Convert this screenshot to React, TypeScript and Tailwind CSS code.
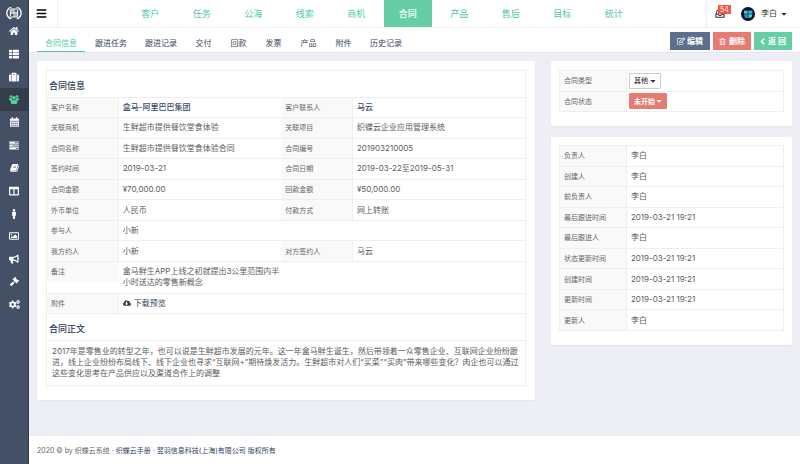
import React, { useState } from 'react';
import {
  FaBars, FaBullhorn, FaCaretDown, FaCloudDownloadAlt, FaCogs, FaColumns,
  FaGavel, FaHome, FaMale, FaRegEdit, FaRegImage, FaRegTrashAlt, FaSuitcase, FaThList,
} from 'react-icons/fa';

const NAV_ITEMS = ['客户', '任务', '公海', '线索', '商机', '合同', '产品', '售后', '目标', '统计'];
const TABS = ['合同信息', '跟进任务', '跟进记录', '交付', '回款', '发票', '产品', '附件', '历史记录'];

const CONTRACT_ROWS = [
  ['客户名称', '盒马-阿里巴巴集团', '客户联系人', '马云'],
  ['关联商机', '生鲜超市提供餐饮堂食体验', '关联项目', '织蝶云企业应用管理系统'],
  ['合同名称', '生鲜超市提供餐饮堂食体验合同', '合同编号', '201903210005'],
  ['签约时间', '2019-03-21', '合同日期', '2019-03-22至2019-05-31'],
  ['合同金额', '¥70,000.00', '回款金额', '¥50,000.00'],
  ['外币单位', '人民币', '付款方式', '网上转账'],
  ['参与人', '小新'],
  ['我方约人', '小新', '对方签约人', '马云'],
];

const RECORD_ROWS = [
  ['负责人', '李白'],
  ['创建人', '李白'],
  ['前负责人', '李白'],
  ['最后跟进时间', '2019-03-21 19:21'],
  ['最后跟进人', '李白'],
  ['状态更新时间', '2019-03-21 19:21'],
  ['创建时间', '2019-03-21 19:21'],
  ['更新时间', '2019-03-21 19:21'],
  ['更新人', '李白'],
];

const TasksIcon: React.FC = () => (
  <svg viewBox="0 0 28 24" className="w-[10px] h-[9px]" fill="currentColor">
    <path fillRule="evenodd" d="M1 1h26v6H1zM16 3v2h9V3zM1 9h26v6H1zM10 11v2h15v-2zM1 17h26v6H1zM19 19v2h6v-2z" />
  </svg>
);

const CalendarIcon: React.FC = () => (
  <svg viewBox="0 0 26 28" className="w-[9px] h-[10px]" fill="currentColor">
    <path d="M2 4h3V1.500a1.500 1.500 0 0 1 1.500-1.500h1A1.500 1.500 0 0 1 9 1.500V4h8V1.500A1.500 1.500 0 0 1 18.500 0h1A1.500 1.500 0 0 1 21 1.500V4h3a2 2 0 0 1 2 2v4H0V6a2 2 0 0 1 2-2z" />
    <path fillRule="evenodd" d="M0 10h26v16a2 2 0 0 1-2 2H2a2 2 0 0 1-2-2zM2 11v4h4.500v-4zM7.500 11v4h5v-4zM13.500 11v4h5v-4zM19.500 11v4H24v-4zM2 16v4h4.500v-4zM7.500 16v4h5v-4zM13.500 16v4h5v-4zM19.500 16v4H24v-4zM2 21v5h4.500v-5zM7.500 21v5h5v-5zM13.500 21v5h5v-5zM19.500 21v5H24v-5z" />
    <path d="M0 10h26v16a2 2 0 0 1-2 2H2a2 2 0 0 1-2-2z" opacity="0.4" />
  </svg>
);

const UsersIcon: React.FC = () => (
  <svg viewBox="0 0 30 27" className="w-[10px] h-[9px]" fill="currentColor">
    <circle cx="6" cy="4.500" r="4" />
    <circle cx="24" cy="4.500" r="4" />
    <circle cx="15" cy="8.500" r="5.500" />
    <path d="M2 9q4 2 7 0-1 4 2 6-3 0-5 2H3q-3 0-3-3.500Q0 8 2 9zM28 9q-4 2-7 0 1 4-2 6 3 0 5 2h3q3 0 3-3.500Q30 8 28 9z" />
    <path d="M10 14q5 3.500 10 0 5 1 5 8 0 5-4 5H9q-4 0-4-5 0-7 5-8z" />
  </svg>
);

const BookIcon: React.FC = () => (
  <svg viewBox="0 0 27 24" className="w-[9px] h-2" fill="currentColor">
    <path fillRule="evenodd" d="M9 0h14q2 0 1.500 2L19 18q-.6 2-3 2H4.500q-1.500 0-1 1.200T5.500 22H19L25.500 4q2 1 1.300 3L22 22q-.6 2-3 2H5Q0 24 0 19L5.500 3Q6.500 0 9 0zM11 5l-.6 2h9l.6-2zM9.600 9.500 9 11.500h9l.6-2z" />
  </svg>
);

const InboxIcon: React.FC = () => (
  <svg viewBox="0 0 24 22" className="w-[10px] h-[9px]" fill="none" stroke="currentColor" strokeWidth="2.500">
    <path d="M2 13 5.500 3h13L22 13v7H2zM2 13h6l2 3h4l2-3h6" />
  </svg>
);

const ChevronIcon: React.FC = () => (
  <svg viewBox="0 0 14 20" className="w-[5px] h-[7px]" fill="none" stroke="currentColor" strokeWidth="4.500">
    <path d="M12 2 4 10l8 8" />
  </svg>
);

const Logo: React.FC = () => (
  <svg viewBox="0 0 48 42" className="w-4 h-[14px]" fill="none" stroke="#fff">
    <path d="M16 4Q9 4 5 11.500 0 21 5 30.500 9 38 16 38M32 4Q39 4 43 11.500 48 21 43 30.500 39 38 32 38" strokeWidth="4" />
    <rect x="13" y="9" width="22" height="24" rx="2" strokeWidth="3" />
    <path d="M24 9v24M13 22h11M24 19h11" strokeWidth="2.500" />
    <path d="M14 10h9v11h-9zM25 20h9v12h-9z" fill="#fff" stroke="none" opacity="0.55" />
  </svg>
);

const SIDE_LINKS = [
  { label: '首页', icon: <FaHome size={10} /> },
  { label: '列表', icon: <FaThList size={10} /> },
  { label: '商机', icon: <FaSuitcase size={10} /> },
  { label: '客户', icon: <UsersIcon /> },
  { label: '日历', icon: <CalendarIcon /> },
  { label: '任务', icon: <TasksIcon /> },
  { label: '知识库', icon: <BookIcon /> },
  { label: '看板', icon: <FaColumns size={10} /> },
  { label: '人事', icon: <FaMale size={10} /> },
  { label: '图片', icon: <FaRegImage size={10} /> },
  { label: '公告', icon: <FaBullhorn size={10} /> },
  { label: '审批', icon: <FaGavel size={9} /> },
  { label: '设置', icon: <FaCogs size={11} /> },
];

const LABEL = 'bg-[#f9f9f9] border-b border-r border-[#efefef] px-1 text-[7px] font-normal text-left text-[#666]';
const VALUE = 'border-b border-[#efefef] px-1 text-[#5c5c5c]';
const HEADING = 'border-b border-[#efefef] px-[2px] pt-1 text-left text-[9px] font-medium text-[#2a3a52]';

const App: React.FC = () => {
  const [activeNav, setActiveNav] = useState('合同');
  const [activeTab, setActiveTab] = useState('合同信息');
  const [activeSide, setActiveSide] = useState(3);
  const [contractType, setContractType] = useState('其他');
  const [contractStatus, setContractStatus] = useState('未开始');

  return (
    <div className="min-h-screen flex bg-[#edeff4] text-[8px] leading-[11px] text-[#5c5c5c] font-[Inter,'Noto_Sans_CJK_SC',sans-serif]">
      <aside className="w-[29px] flex-shrink-0 bg-[#435065] border-r border-[#2d3a50]">
        <a href="#" aria-label="首页" className="flex justify-center h-5 pt-[6px]"><Logo /></a>
        <nav className="flex flex-col h-[296px]">
          {SIDE_LINKS.map((link, i) => (
            <button key={link.label} aria-label={link.label} onClick={() => setActiveSide(i)} className={`flex-1 flex items-center justify-center ${activeSide === i ? 'bg-[#353c4b] text-[#52d29b]' : 'text-white'}`}>
              {link.icon}
            </button>
          ))}
        </nav>
      </aside>

      <div className="flex-1 min-w-0 flex flex-col">
        <header className="flex h-7 bg-white border-b border-[#f1f1f1]">
          <button aria-label="菜单" className="w-[29px] flex-shrink-0 flex items-center justify-center border-r border-[#eee] pr-1 text-black"><FaBars size={11} /></button>
          <nav className="flex-1 flex justify-center">
            <div className="w-full max-w-[512px] grid grid-cols-10 gap-x-[3px]">
              {NAV_ITEMS.map(item => (
                <a key={item} href="#" onClick={() => setActiveNav(item)} className={`flex items-center justify-center text-[9px] ${activeNav === item ? 'bg-[#65cea7] text-white font-medium' : 'text-[#4fcb98]'}`}>{item}</a>
              ))}
            </div>
          </nav>
          <div className="flex items-center border-l border-[#eee] pl-2 pr-3 text-[#333]">
            <button aria-label="消息" className="relative mr-4">
              <InboxIcon />
              <span className="absolute left-[3px] -top-1 bg-[#fb5447] text-white text-[7px] leading-[9px] px-[2px]">54</span>
            </button>
            <button className="flex items-center">
              <svg viewBox="0 0 42 42" className="w-[14px] h-[14px] mr-[6px]">
                <circle cx="21" cy="21" r="21" fill="#10152f" />
                <path d="M9 11h11v9H9z" fill="#2fd6c8" />
                <path d="M22 11h12v9H22z" fill="#36b5e8" />
                <path d="M9 22h11v11h-8z" fill="#2a8de0" />
                <path d="M22 22h12l-2 9-10 2z" fill="#3fdca0" />
              </svg>
              李白
              <FaCaretDown size={8} className="ml-[3px]" />
            </button>
          </div>
        </header>

        <div className="flex justify-between h-[25px] bg-white border-b border-[#e4e6eb] px-2">
          <div className="flex gap-[2px]">
            {TABS.map(tab => (
              <button key={tab} onClick={() => setActiveTab(tab)} className={`min-w-[33px] px-2 pt-[7px] border-b whitespace-nowrap ${activeTab === tab ? 'border-[#52cb9a] text-[#52cb9a]' : 'border-transparent text-[#36435a]'}`}>{tab}</button>
            ))}
          </div>
          <div className="flex items-center gap-[3px] pt-[2px] font-bold text-white">
            <button className="h-[18px] px-[7px] flex items-center gap-[2px] bg-[#5d6f8d]"><FaRegEdit size={8} />编辑</button>
            <button className="h-[18px] px-[6px] flex items-center gap-[3px] bg-[#e67b73]"><FaRegTrashAlt size={7} />删除</button>
            <button className="h-[18px] px-[6px] flex items-center gap-[3px] bg-[#65cea7]"><ChevronIcon />返 回</button>
          </div>
        </div>

        <main className="flex-1 grid grid-cols-12 gap-4 items-start px-2 pt-2 pb-9">
          <section className="col-span-8 bg-white rounded-[2px] shadow-xs px-[9px] pt-[9px] pb-[14px]">
            <table className="w-full h-[316px] table-fixed border-separate border-spacing-0 border-t border-x border-[#efefef]">
              <colgroup>
                <col className="w-[15%]" /><col className="w-[34%]" /><col className="w-[15%]" /><col className="w-[36%]" />
              </colgroup>
              <tbody>
                <tr className="h-[26px]">
                  <th colSpan={4} className={HEADING}>合同信息</th>
                </tr>
                {CONTRACT_ROWS.map((row, i) => (
                  <tr key={row[0]} className="h-5">
                    <th className={LABEL}>{row[0]}</th>
                    <td colSpan={row.length === 2 ? 3 : 1} className={VALUE}>
                      {i === 0 ? <a href="#" className="font-medium text-[#3a4a68]">{row[1]}</a> : row[1]}
                    </td>
                    {row.length > 2 && <th className={LABEL}>{row[2]}</th>}
                    {row.length > 2 && (
                      <td className={VALUE}>
                        {i === 0 ? <a href="#" className="font-medium text-[#3a4a68]">{row[3]}</a> : row[3]}
                      </td>
                    )}
                  </tr>
                ))}
                <tr className="h-[31px]">
                  <th className="border-b border-[#efefef] p-0 align-top text-left text-[7px] font-normal text-[#666]">
                    <div className="h-5 px-1 flex items-center bg-[#f9f9f9]">备注</div>
                  </th>
                  <td colSpan={3} className={VALUE}>
                    <p className="w-40">盒马鲜生APP上线之初就提出3公里范围内半小时送达的零售新概念</p>
                  </td>
                </tr>
                <tr className="h-5">
                  <th className={LABEL}>附件</th>
                  <td colSpan={3} className={VALUE}>
                    <a href="#" className="flex items-center gap-[3px] text-[#2f3f5a]"><FaCloudDownloadAlt size={8} />下载预览</a>
                  </td>
                </tr>
                <tr className="h-[26px]">
                  <th colSpan={4} className={HEADING}>合同正文</th>
                </tr>
                <tr className="h-[44px]">
                  <td colSpan={4} className="border-b border-[#efefef] px-[5px]">
                    2017年是零售业的转型之年，也可以说是生鲜超市发展的元年。这一年盒马鲜生诞生，然后带领着一众零售企业、互联网企业纷纷跟进，线上企业纷纷布局线下、线下企业也寻求“互联网+”期待焕发活力。生鲜超市对人们“买菜”“买肉”带来哪些变化？肉企也可以通过这些变化思考在产品供应以及渠道合作上的调整
                  </td>
                </tr>
              </tbody>
            </table>
          </section>

          <div className="col-span-4 flex flex-col gap-[11px]">
            <section className="bg-white rounded-[2px] shadow-xs px-2 pt-[9px] pb-[14px]">
              <table className="w-full h-[42px] table-fixed border-separate border-spacing-0 border-t border-x border-[#efefef]">
                <colgroup><col className="w-[30%]" /><col className="w-[70%]" /></colgroup>
                <tbody>
                  <tr className="h-5">
                    <th className={LABEL}><label htmlFor="contract-type">合同类型</label></th>
                    <td className="border-b border-[#efefef] px-[2px]">
                      <div className="relative w-8">
                        <select id="contract-type" value={contractType} onChange={(e) => setContractType(e.target.value)} className="block w-full h-4 pl-1 appearance-none bg-white border border-[#ccc] rounded-[1px] text-[7px] font-medium text-[#333]">
                          <option>其他</option>
                          <option>销售</option>
                        </select>
                        <FaCaretDown size={8} className="absolute right-1 top-1 text-[#333] pointer-events-none" />
                      </div>
                    </td>
                  </tr>
                  <tr className="h-5">
                    <th className={LABEL}><label htmlFor="contract-status">合同状态</label></th>
                    <td className="border-b border-[#efefef] px-[2px]">
                      <div className="relative w-[38px]">
                        <select id="contract-status" value={contractStatus} onChange={(e) => setContractStatus(e.target.value)} className="block w-full h-4 pl-1 appearance-none bg-[#e67b73] border border-[#e67b73] rounded-[1px] text-[7px] font-bold text-white">
                          <option>未开始</option>
                          <option>进行中</option>
                        </select>
                        <FaCaretDown size={8} className="absolute right-1 top-1 text-white pointer-events-none" />
                      </div>
                    </td>
                  </tr>
                </tbody>
              </table>
            </section>

            <section className="bg-white rounded-[2px] shadow-xs px-2 pt-2 pb-[14px]">
              <table className="w-full h-[186px] table-fixed border-separate border-spacing-0 border-t border-x border-[#efefef]">
                <colgroup><col className="w-[30%]" /><col className="w-[70%]" /></colgroup>
                <tbody>
                  {RECORD_ROWS.map(([label, value]) => (
                    <tr key={label} className="h-5">
                      <th className={LABEL}>{label}</th>
                      <td className={VALUE}>{value}</td>
                    </tr>
                  ))}
                </tbody>
              </table>
            </section>
          </div>
        </main>

        <footer className="h-7 flex items-center px-2 bg-white text-[7px] text-[#666]">
          <p>2020 © by 织蝶云系统 · <a href="#" className="text-[#2f3f5a]">织蝶云手册</a> · <a href="#" className="text-[#2f3f5a]">翌羽信息科技(上海)有限公司 版权所有</a></p>
        </footer>
      </div>
    </div>
  );
};

export default App;
